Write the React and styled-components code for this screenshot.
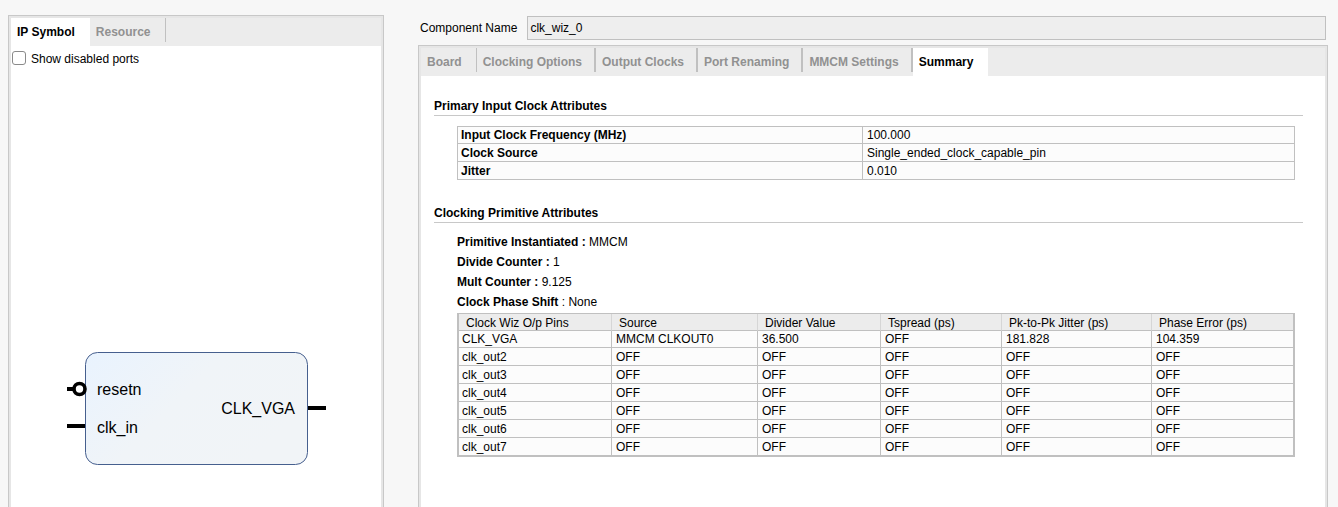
import React, { useState } from "react";
import styled, { createGlobalStyle } from "styled-components";

const GlobalStyle = createGlobalStyle`
  *, *::before, *::after { box-sizing: border-box; }
  body {
    margin: 0;
    background: #f7f7f7;
    color: #000;
    font: 12px/16px "Liberation Sans", Arial, sans-serif;
  }
`;

const Page = styled.div`
  display: grid;
  grid-template-columns: minmax(0, 376fr) minmax(0, 910fr);
  column-gap: 34px;
  min-height: 100vh;
  padding: 15px 10px 0 8px;
`;

const Column = styled.div`
  display: flex;
  flex-direction: column;
`;

const Panel = styled.section`
  flex: 1;
  display: flex;
  flex-direction: column;
  border: 1px solid #c8c8c8;
  border-bottom: 0;
  padding: 2px 2px 0;
  background: #e6e6e6;
`;

const PanelBody = styled.div`
  flex: 1;
  background: #fff;
  padding: ${(p) => p.$padding || "0"};
`;

const TabStrip = styled.div`
  display: flex;
  align-items: flex-start;
  height: 28px;
  background: #ececec;
`;

const tabPadding = (p) => {
  if (p.$active) return "0 15px 0 6px";
  return p.$thin ? "4px 14px 0 6px" : "4px 12px 0 6px";
};

const Tab = styled.button`
  height: ${(p) => (p.$active ? 28 : 24)}px;
  margin: 0;
  padding: ${tabPadding};
  border: 0;
  border-right: ${(p) => (p.$active ? 0 : p.$thin ? 1 : 2)}px solid #c0c0c0;
  background: ${(p) => (p.$active ? "#fff" : "transparent")};
  color: ${(p) => (p.$active ? "#000" : "#919191")};
  font: bold 12px/16px "Liberation Sans", Arial, sans-serif;
  white-space: nowrap;
`;

const PortToggle = styled.label`
  display: flex;
  align-items: flex-end;
  gap: 5px;
  padding: 5px 1px 4px;
`;

const CheckBox = styled.input`
  appearance: none;
  align-self: flex-start;
  width: 14px;
  height: 14px;
  margin: 0;
  border: 1px solid #8a8a8a;
  border-radius: 3px;
  background: #fff;
  &:checked { background: #4a6ea9; }
`;

const Symbol = styled.svg`
  display: block;
  margin: 281px auto 0;
  font: 16px "Liberation Sans", Arial, sans-serif;
`;

const NameRow = styled.div`
  display: flex;
  align-items: center;
  gap: 10px;
  padding: 1px 2px 5px;
`;

const NameInput = styled.input`
  flex: 1;
  min-width: 0;
  height: 24px;
  padding: 0 2px;
  border: 1px solid #c0c0c0;
  background: #eee;
  color: #000;
  font: inherit;
`;

const Group = styled.section`
  & + & { margin-top: 25px; }
`;

const GroupTitle = styled.h2`
  margin: 0;
  padding-bottom: 1px;
  border-bottom: 1px solid #c8c8c8;
  font: bold 12px/16px "Liberation Sans", Arial, sans-serif;
`;

const GroupBody = styled.div`
  padding: ${(p) => p.$top}px 8px 0 23px;
`;

const Fact = styled.p`
  margin: 0;
  line-height: 20px;
`;

const Grid = styled.table`
  width: 100%;
  table-layout: fixed;
  border-collapse: separate;
  border-spacing: 0;
  border: ${(p) => (p.$heavy ? 2 : 1)}px solid #c0c0c0;
  border-top-width: 1px;
  margin-top: ${(p) => (p.$heavy ? 1 : 0)}px;
  background: #fcfcfc;

  th, td {
    height: 18px;
    padding: 0 4px;
    border-right: 1px solid #c0c0c0;
    border-bottom: 1px solid #c0c0c0;
    line-height: 16px;
    text-align: left;
    white-space: nowrap;
  }
  tr > :last-child { border-right: 0; }
  tbody tr:first-child > * { height: 17px; }
  tbody tr:last-child > * { border-bottom: 0; height: 17px; }
  tbody tr > :first-child { padding-left: 3px; }
  thead th {
    height: 17px;
    padding: 2px 7px 0;
    border-right-color: #d6d6d6;
    background: #ececec;
    font-weight: normal;
    line-height: 14px;
  }
`;

const TABS = ["Board", "Clocking Options", "Output Clocks", "Port Renaming", "MMCM Settings", "Summary"];

const INPUT_ROWS = [
  ["Input Clock Frequency (MHz)", "100.000"],
  ["Clock Source", "Single_ended_clock_capable_pin"],
  ["Jitter", "0.010"],
];

const PIN_COLUMNS = [
  ["Clock Wiz O/p Pins", 153],
  ["Source", 146],
  ["Divider Value", 123],
  ["Tspread (ps)", 121],
  ["Pk-to-Pk Jitter (ps)", 150],
  ["Phase Error (ps)", 141],
];

const PIN_ROWS = [
  ["CLK_VGA", "MMCM CLKOUT0", "36.500", "OFF", "181.828", "104.359"],
  ...[2, 3, 4, 5, 6, 7].map((n) => [`clk_out${n}`, "OFF", "OFF", "OFF", "OFF", "OFF"]),
];

function IpSymbol() {
  return (
    <Symbol width="258" height="114" viewBox="0 0 258 114" overflow="visible" role="img" aria-label="clk_wiz_0 ports">
      <defs>
        <linearGradient id="block" x1="0" y1="0" x2="1" y2="0.5">
          <stop offset="0" stopColor="#e9f3fe" />
          <stop offset="0.5" stopColor="#f0f4f8" />
          <stop offset="1" stopColor="#f1f4f7" />
        </linearGradient>
      </defs>
      <rect x="18.5" y="0.5" width="222" height="112" rx="12" fill="url(#block)" stroke="#465f8e" />
      <path d="M0 37h6M0 74h18M241 56h18" stroke="#000" strokeWidth="4" />
      <circle cx="12.5" cy="37" r="5.5" fill="#fff" stroke="#000" strokeWidth="3.6" />
      <text x="30" y="43">resetn</text>
      <text x="30" y="81">clk_in</text>
      <text x="228" y="62" textAnchor="end">CLK_VGA</text>
    </Symbol>
  );
}

export default function App() {
  const [showDisabled, setShowDisabled] = useState(false);
  return (
    <>
      <GlobalStyle />
      <Page>
        <Column>
          <Panel>
            <TabStrip role="tablist">
              <Tab role="tab" aria-selected="true" $active>IP Symbol</Tab>
              <Tab role="tab" aria-selected="false" $thin>Resource</Tab>
            </TabStrip>
            <PanelBody>
              <PortToggle>
                <CheckBox
                  type="checkbox"
                  checked={showDisabled}
                  onChange={(e) => setShowDisabled(e.target.checked)}
                />
                Show disabled ports
              </PortToggle>
              <IpSymbol />
            </PanelBody>
          </Panel>
        </Column>

        <Column>
          <NameRow>
            <label htmlFor="component-name">Component Name</label>
            <NameInput id="component-name" type="text" readOnly value="clk_wiz_0" />
          </NameRow>
          <Panel>
            <TabStrip role="tablist">
              {TABS.map((name, i) => (
                <Tab
                  key={name}
                  role="tab"
                  aria-selected={name === "Summary"}
                  $active={name === "Summary"}
                  $thin={i === 0}
                >
                  {name}
                </Tab>
              ))}
            </TabStrip>
            <PanelBody $padding="22px 22px 24px 13px">
              <Group>
                <GroupTitle>Primary Input Clock Attributes</GroupTitle>
                <GroupBody $top={10}>
                  <Grid>
                    <colgroup>
                      <col width="405" />
                      <col width="431" />
                    </colgroup>
                    <tbody>
                      {INPUT_ROWS.map(([name, value]) => (
                        <tr key={name}>
                          <th scope="row">{name}</th>
                          <td>{value}</td>
                        </tr>
                      ))}
                    </tbody>
                  </Grid>
                </GroupBody>
              </Group>
              <Group>
                <GroupTitle>Clocking Primitive Attributes</GroupTitle>
                <GroupBody $top={9}>
                  <Fact><b>Primitive Instantiated :</b> MMCM</Fact>
                  <Fact><b>Divide Counter :</b> 1</Fact>
                  <Fact><b>Mult Counter :</b> 9.125</Fact>
                  <Fact><b>Clock Phase Shift</b> : None</Fact>
                  <Grid $heavy>
                    <colgroup>
                      {PIN_COLUMNS.map(([name, width]) => (
                        <col key={name} width={width} />
                      ))}
                    </colgroup>
                    <thead>
                      <tr>
                        {PIN_COLUMNS.map(([name]) => (
                          <th key={name} scope="col">{name}</th>
                        ))}
                      </tr>
                    </thead>
                    <tbody>
                      {PIN_ROWS.map((row) => (
                        <tr key={row[0]}>
                          {row.map((cell, i) => (
                            <td key={i}>{cell}</td>
                          ))}
                        </tr>
                      ))}
                    </tbody>
                  </Grid>
                </GroupBody>
              </Group>
            </PanelBody>
          </Panel>
        </Column>
      </Page>
    </>
  );
}
